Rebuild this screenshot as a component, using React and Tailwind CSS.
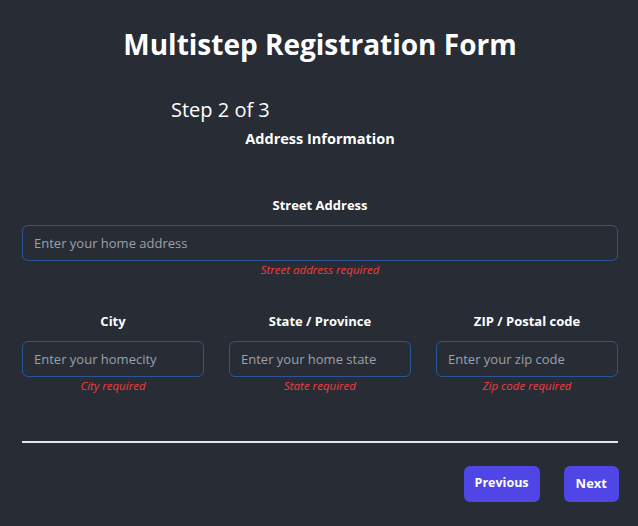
import React from "react";

const font = { fontFamily: '"Open Sans", "Noto Sans", sans-serif' };

function Field({ label, placeholder, error }) {
  return (
    <div className="flex flex-col">
      <label className="text-center text-[13px] font-bold text-white leading-[20px]">{label}</label>
      <input
        placeholder={placeholder}
        className="mt-[10px] h-[36px] w-full rounded-[6px] border border-[#2b5597] bg-transparent px-[11px] text-[13px] text-white placeholder:text-[#9aa1ac] outline-none"
      />
      <p className="mt-[1px] text-center text-[11.5px] italic leading-[16px] text-[#f03e3e]">{error}</p>
    </div>
  );
}

export default function App() {
  return (
    <div className="min-h-[526px] w-full bg-[#282c34] pl-[22px] pr-[20px] pt-[24px] text-white" style={font}>
      <h1 className="text-center text-[28px] font-bold leading-[40px]">Multistep Registration Form</h1>
      <div className="mt-[32px] pl-[149px] text-[20px] leading-[28px]">Step 2 of 3</div>
      <h2 className="mt-[4px] text-center text-[14.5px] font-bold leading-[22px]">Address Information</h2>
      <div className="mt-[45px]">
        <Field label="Street Address" placeholder="Enter your home address" error="Street address required" />
      </div>
      <div className="mt-[33px] grid grid-cols-3 gap-[25px]">
        <Field label="City" placeholder="Enter your homecity" error="City required" />
        <Field label="State / Province" placeholder="Enter your home state" error="State required" />
        <Field label="ZIP / Postal code" placeholder="Enter your zip code" error="Zip code required" />
      </div>
      <div className="mt-[47px] h-[1.5px] w-full bg-[#e5e7eb]" />
      <div className="-mr-[1px] mt-[23px] flex justify-end gap-[24px]">
        <button className="h-[36px] rounded-[6px] bg-[#4f46e5] px-[11px] text-[12.5px] font-bold text-white">Previous</button>
        <button className="h-[36px] rounded-[6px] bg-[#4f46e5] px-[12px] text-[13px] font-bold text-white">Next</button>
      </div>
    </div>
  );
}
